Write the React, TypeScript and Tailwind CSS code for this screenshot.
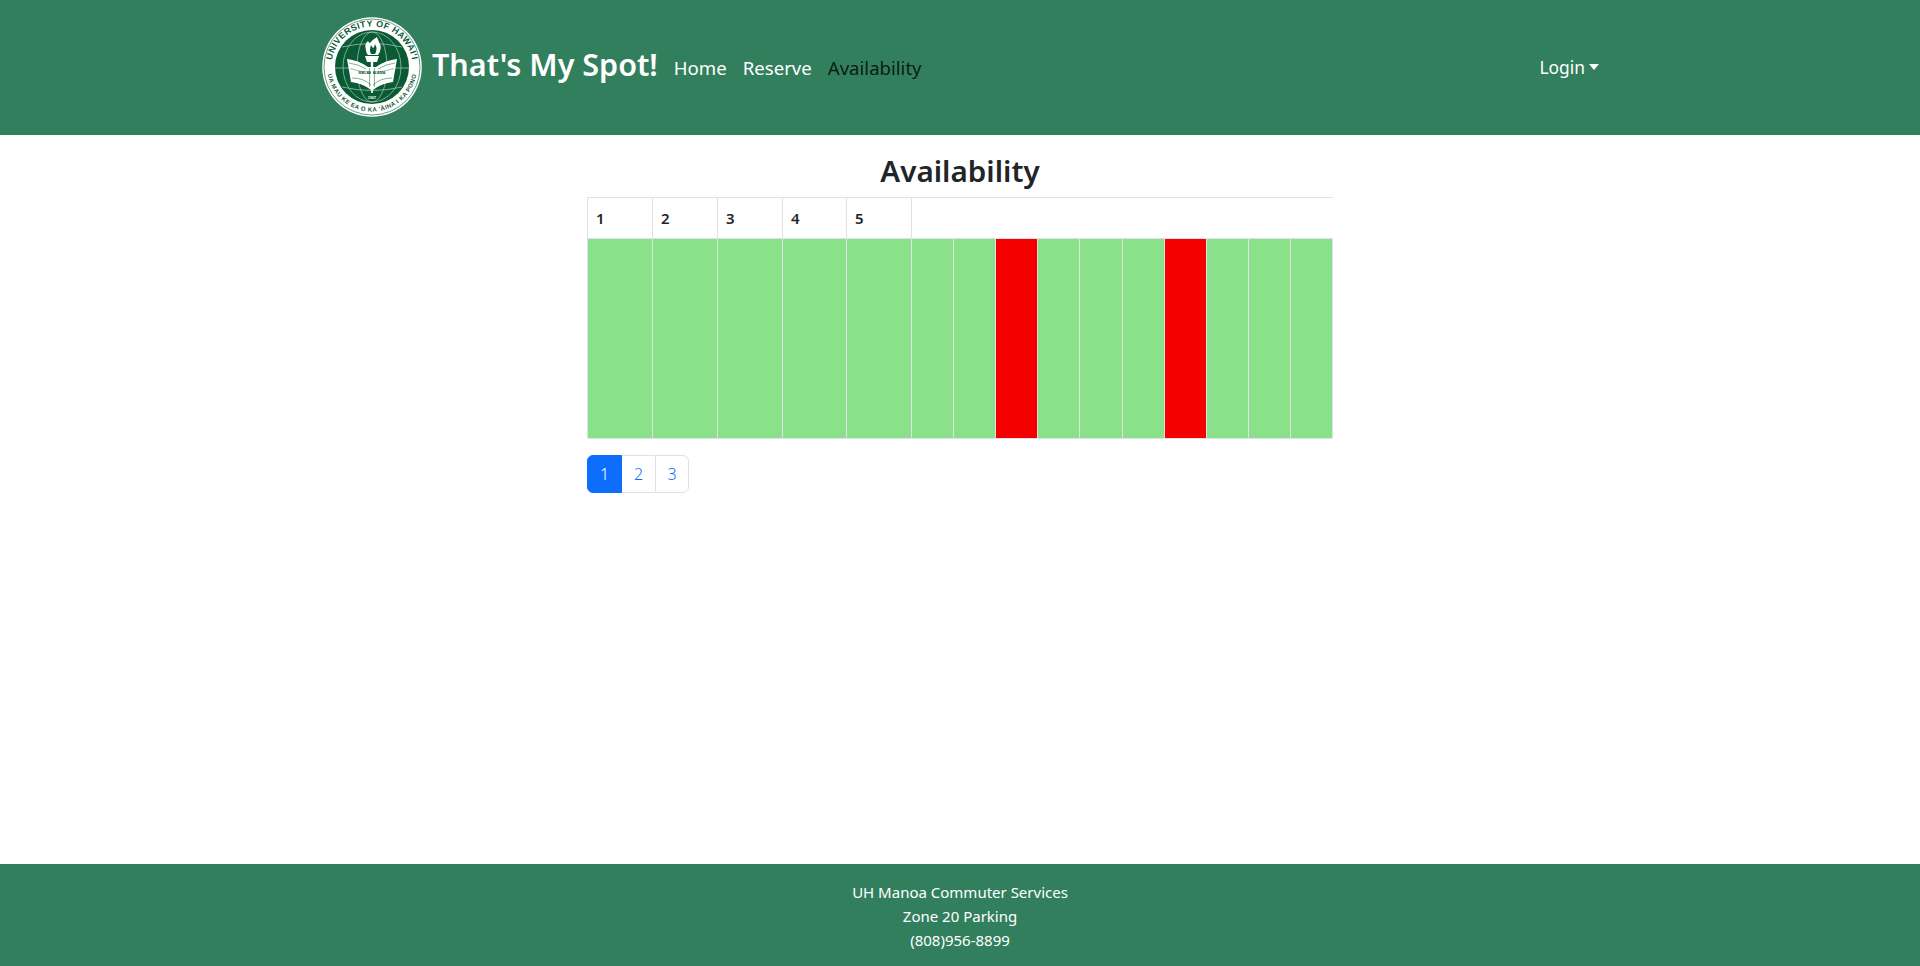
const font = "[font-family:'Noto_Sans',sans-serif]";

function Logo() {
  return (
    <svg viewBox="0 0 100 100" className="w-[100px] h-[100px] shrink-0">
      <defs>
        <path id="arcTop" d="M 9.6 56 A 40.8 40.8 0 1 1 90.4 56" />
        <path id="arcBottom" d="M 5.8 58 A 45 45 0 0 0 94.2 58" />
      </defs>
      <circle cx="50" cy="50" r="49.8" fill="#ffffff" />
      <circle cx="50" cy="50" r="48" fill="none" stroke="#0b5a36" strokeWidth="0.6" />
      <circle cx="50" cy="50" r="37" fill="#0b5a36" />
      <text fill="#0b5a36" fontSize="8.8" fontWeight="700" fontFamily="'Liberation Sans',sans-serif" letterSpacing="0.5">
        <textPath href="#arcTop" startOffset="50%" textAnchor="middle">UNIVERSITY OF HAWAI'I</textPath>
      </text>
      <text fill="#0b5a36" fontSize="6" fontWeight="700" fontFamily="'Liberation Sans',sans-serif" letterSpacing="0.45">
        <textPath href="#arcBottom" startOffset="50%" textAnchor="middle">UA MAU KE EA O KA 'ĀINA I KA PONO</textPath>
      </text>
      <g fill="none" stroke="#a9cdb9" strokeWidth="0.7">
        <ellipse cx="50" cy="50" rx="15" ry="35" />
        <ellipse cx="50" cy="50" rx="29" ry="35" />
        <path d="M20 30 Q50 23 80 30" />
        <path d="M13 51 H87" />
        <path d="M20 70 Q50 77 80 70" />
      </g>
      {/* open book */}
      <path d="M25 42 Q36 43 46 50 H54 Q64 43 75 42 L71 65 Q60 66 51 73 H49 Q40 66 29 65 Z" fill="#ffffff" />
      <path d="M27 46 Q36 47 44 52 M73 46 Q64 47 56 52" fill="none" stroke="#0b5a36" strokeWidth="0.5" />
      <path d="M28 51.5 Q50 59 72 51.5" fill="none" stroke="#0b5a36" strokeWidth="0.4" />
      <text x="50" y="57" textAnchor="middle" fontSize="3.7" fontWeight="700" fill="#0b5a36" fontFamily="'Liberation Sans',sans-serif">MĀLAMALAMA</text>
      <path d="M30 61 Q42 61 49 68 M70 61 Q58 61 51 68" fill="none" stroke="#0b5a36" strokeWidth="0.5" />
      {/* torch */}
      <path d="M44 33 Q42 27 46 24 Q47 26 48 26 Q50 23 55 20 Q56 23 57 25 Q61 31 56 38 H46 Q44 36 44 33 Z" fill="#ffffff" />
      <path d="M49 28 Q47 33 49 37 H53 Q56 32 53 27 Q52 31 51 31 Q50 30 49 28 Z" fill="#0b5a36" />
      <path d="M43 39 H57 L55 45 H45 Z" fill="#ffffff" />
      <path d="M48.8 45 H51.2 L50.8 76 H49.2 Z" fill="#ffffff" />
      <path d="M47.6 51 V70 M52.4 51 V70" stroke="#0b5a36" strokeWidth="0.5" />
      <text x="50" y="82" textAnchor="middle" fontSize="3.8" fontWeight="700" fill="#ffffff" fontFamily="'Liberation Sans',sans-serif">1907</text>
    </svg>
  );
}

const headers = ["1", "2", "3", "4", "5"];
const colWidths = [
  "w-[65px]", "w-[65px]", "w-[65px]", "w-[64px]", "w-[65px]",
  "w-[42px]", "w-[42px]", "w-[42px]", "w-[42px]", "w-[43px]",
  "w-[42px]", "w-[42px]", "w-[42px]", "w-[42px]", "w-[42px]",
];
const taken = [false, false, false, false, false, false, false, true, false, false, false, true, false, false, false];

export default function App() {
  return (
    <div className={`${font} min-h-[966px] flex flex-col bg-white text-[#212529]`}>
      <nav className="h-[135px] bg-[#327f5e] shrink-0">
        <div className="w-[1320px] mx-auto pl-[22px] pr-[21px] h-full flex items-start justify-between">
          <div className="flex items-start">
            <div className="pt-[17px]"><Logo /></div>
            <span className="ml-[10px] mt-[43px] text-[30.5px] leading-[42px] font-semibold text-white">That's My Spot!</span>
            <div className="ml-[16px] mt-[54px] flex gap-[16px] text-[18.6px] leading-[28px]">
              <a className="text-white">Home</a>
              <a className="text-white">Reserve</a>
              <a className="text-[rgba(0,0,0,0.8)]">Availability</a>
            </div>
          </div>
          <div className="mt-[53px] flex items-center text-[17.4px] leading-[28px] text-white">
            <span>Login</span>
            <span className="ml-[4px] w-0 h-0 border-x-[5.5px] border-x-transparent border-t-[6px] border-t-white" />
          </div>
        </div>
      </nav>

      <main className="flex-1">
        <div className="w-[746px] mx-auto">
          <h1 className="text-center text-[29.6px] leading-[42px] font-semibold mt-[15px] mb-0 h-[47px]">Availability</h1>
          <table className="w-[746px] table-fixed border-collapse">
            <colgroup>
              {colWidths.map((w, i) => <col key={i} className={w} />)}
            </colgroup>
            <thead>
              <tr className="h-[41px]">
                {headers.map((h) => (
                  <th key={h} className="border border-[#dee2e6] pl-[8px] text-left text-[15px] font-semibold text-[#212529]">{h}</th>
                ))}
                <th colSpan={10} className="border-t border-b border-l border-[#dee2e6]" />
              </tr>
            </thead>
            <tbody>
              <tr className="h-[200px]">
                {taken.map((t, i) => (
                  <td key={i} className={`border border-[#dee2e6] ${t ? "bg-[#f50000]" : "bg-[#89e189]"}`} />
                ))}
              </tr>
            </tbody>
          </table>
          <div className="mt-[16px] flex text-[16px] leading-[24px] font-light w-fit">
            <a className="w-[35px] h-[38px] flex items-center justify-center bg-[#0d6efd] text-white rounded-l-[6px] border border-[#0d6efd]">1</a>
            <a className="w-[33px] h-[38px] flex items-center justify-center text-[#0d6efd] border-y border-[#dee2e6]">2</a>
            <a className="w-[34px] h-[38px] flex items-center justify-center text-[#0d6efd] border border-[#dee2e6] rounded-r-[6px]">3</a>
          </div>
        </div>
      </main>

      <footer className="h-[102px] shrink-0 bg-[#327f5e] text-white text-center text-[15px] leading-[24px] pt-[16px]">
        <div>UH Manoa Commuter Services</div>
        <div>Zone 20 Parking</div>
        <div>(808)956-8899</div>
      </footer>
    </div>
  );
}
